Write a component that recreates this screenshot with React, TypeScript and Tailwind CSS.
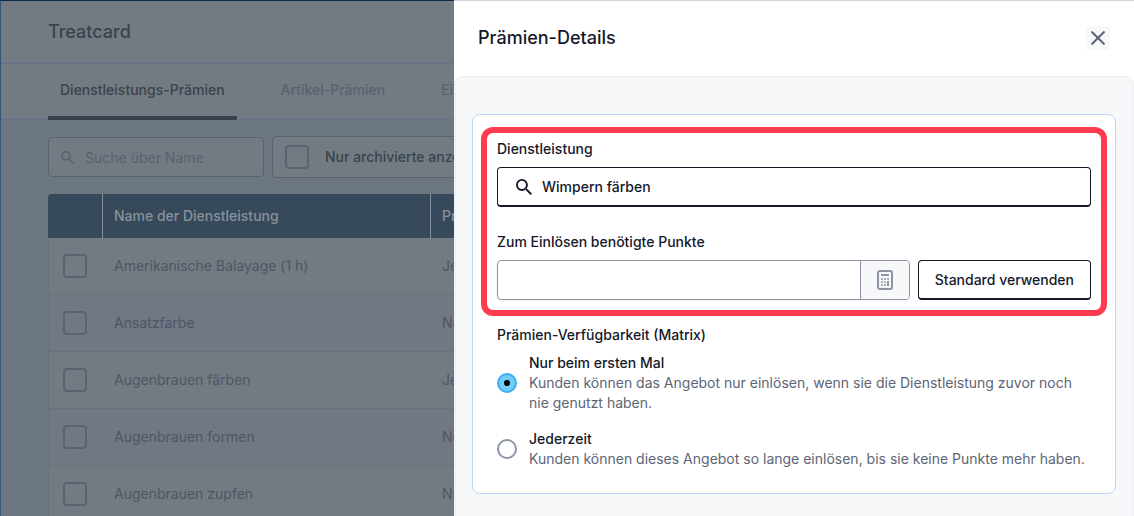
import React, { useState } from "react";

const rows = [
  { name: "Amerikanische Balayage (1 h)", available: "Jederzeit" },
  { name: "Ansatzfarbe", available: "Nur beim ersten Mal" },
  { name: "Augenbrauen färben", available: "Jederzeit" },
  { name: "Augenbrauen formen", available: "Nur beim ersten Mal" },
  { name: "Augenbrauen zupfen", available: "Nur beim ersten Mal" },
];

const availability = [
  {
    id: "first",
    title: "Nur beim ersten Mal",
    text: "Kunden können das Angebot nur einlösen, wenn sie die Dienstleistung zuvor noch nie genutzt haben.",
  },
  {
    id: "always",
    title: "Jederzeit",
    text: "Kunden können dieses Angebot so lange einlösen, bis sie keine Punkte mehr haben.",
  },
];

function SearchIcon({ className }: { className: string }) {
  return (
    <svg viewBox="3 3 17.5 17.5" fill="currentColor" className={className} aria-hidden="true">
      <path d="M15.5 14h-.79l-.28-.27A6.47 6.47 0 0 0 16 9.5 6.5 6.5 0 1 0 9.5 16c1.61 0 3.09-.59 4.23-1.57l.27.28v.79l5 4.99L20.49 19l-4.99-5zm-6 0C7.01 14 5 11.99 5 9.5S7.01 5 9.5 5 14 7.01 14 9.5 11.99 14 9.5 14z" />
    </svg>
  );
}

function CalculatorIcon() {
  return (
    <svg width="16" height="20" viewBox="0 0 16 20" fill="none" aria-hidden="true">
      <rect x="1" y="1" width="14" height="18" rx="2" stroke="#8d95a5" strokeWidth="2" />
      <path d="M4 5h8" stroke="#8d95a5" strokeWidth="2" />
      <path d="M4 9h2M7 9h2M10 9h2M4 12h2M7 12h2M4 15h2M7 15h2" stroke="#a9b0bc" strokeWidth="2" />
      <path d="M11 11v5" stroke="#8d95a5" strokeWidth="2" />
    </svg>
  );
}

function Checkbox({ label, id }: { label: string; id?: string }) {
  return (
    <input
      id={id}
      type="checkbox"
      aria-label={label}
      className="block h-6 w-6 shrink-0 appearance-none rounded border-2 border-[#5b6373] checked:bg-[#5b6373]"
    />
  );
}

function RewardsPage() {
  return (
    <main className="min-w-0 flex-1 overflow-hidden whitespace-nowrap border-l border-t border-l-[#34567f] border-t-[#0a2850] bg-[#6c7781]">
      <header className="flex h-[63px] items-center border-b border-[#63738a] bg-[#737b82] px-[47px]">
        <h1 className="text-lg font-medium text-[#3a424e]">Treatcard</h1>
      </header>

      <nav className="flex h-14 border-b border-[#63738a] bg-[#737b82] pl-[47px] text-sm font-medium">
        <button className="-mb-px h-14 shrink-0 border-b-4 border-[#39424d] px-3 pt-1 pb-1 text-[#3a424e]">
          Dienstleistungs-Prämien
        </button>
        <button className="ml-8 shrink-0 px-3 pb-1 text-[#596171]">Artikel-Prämien</button>
        <button className="ml-8 shrink-0 pl-3 pb-1 text-[#596171]">Einstellungen</button>
      </nav>

      <div className="pl-[47px] pt-4">
        <div className="flex items-center gap-2">
          <div className="flex h-10 w-[216px] shrink-0 items-center gap-[11px] rounded border border-[#586274] bg-[#737b82] px-3 text-[#586172]">
            <SearchIcon className="h-[13px] w-[13px] shrink-0" />
            <input
              type="text"
              aria-label="Suche über Name"
              placeholder="Suche über Name"
              className="w-full min-w-0 bg-transparent pt-px text-sm outline-none placeholder:text-[#586172]"
            />
          </div>
          <div className="flex h-[42px] shrink-0 items-center gap-4 rounded border border-[#586274] bg-[#737b82] px-3">
            <Checkbox id="archived" label="Nur archivierte anzeigen" />
            <label htmlFor="archived" className="text-sm font-medium text-[#3a424e]">
              Nur archivierte anzeigen
            </label>
          </div>
        </div>

        <table className="mt-4 w-[640px] table-fixed border-separate border-spacing-0 text-left text-sm text-[#4e5663]">
          <thead>
            <tr className="h-11 text-[#87919a]">
              <th className="w-[55px] rounded-tl border-r border-[#87919a] bg-[#374a5b]" aria-label="Auswahl" />
              <th className="w-[328px] border-r border-[#87919a] bg-[#374a5b] px-[11px] font-medium">
                Name der Dienstleistung
              </th>
              <th className="bg-[#374a5b] px-[11px] font-medium">Prämien-Verfügbarkeit</th>
            </tr>
          </thead>
          <tbody>
            {rows.map((row) => (
              <tr key={row.name} className="h-[57px] odd:bg-[#737b82] even:bg-[#717883]">
                <td className="border-b border-l border-[#69727c] pl-[14px]">
                  <Checkbox label={row.name} />
                </td>
                <td className="border-b border-[#69727c] px-[11px]">{row.name}</td>
                <td className="border-b border-[#69727c] px-[11px]">{row.available}</td>
              </tr>
            ))}
          </tbody>
        </table>
      </div>
    </main>
  );
}

function RewardDrawer() {
  const [selected, setSelected] = useState("first");

  return (
    <aside
      role="dialog"
      aria-labelledby="drawer-title"
      className="flex w-[680px] max-w-full flex-col border-t border-[#d2d2d3] bg-white text-sm text-[#141929]"
    >
      <header className="flex h-[75px] shrink-0 items-center justify-between px-6 pb-[2px]">
        <h2 id="drawer-title" className="text-lg font-medium">
          Prämien-Details
        </h2>
        <button
          aria-label="Schließen"
          className="flex h-6 w-6 items-center justify-center rounded bg-[#f7f8fa] text-[#5d6575]"
        >
          <svg width="14" height="14" viewBox="0 0 14 14" stroke="currentColor" strokeWidth="2" aria-hidden="true">
            <path d="M0.5 0.5l13 13M13.5 0.5l-13 13" />
          </svg>
        </button>
      </header>

      <div className="flex-1 rounded-t-lg border-2 border-b-0 border-[#f1f2f5] bg-[#f7f8fa] px-4 pt-9">
        <section className="rounded-lg border border-[#b7d7fb] bg-white px-2 pt-3 pb-6">
          {/* Highlighted fields */}
          <div className="rounded-xl border-[6px] border-[#ff3b50] px-[10px] pt-[6px] pb-[10px]">
            <label htmlFor="service" className="block font-medium">
              Dienstleistung
            </label>
            <div className="mt-2 flex h-10 items-center gap-[10px] rounded border border-b-2 border-[#141929] px-[18px]">
              <SearchIcon className="h-4 w-4 shrink-0" />
              <input
                id="service"
                type="text"
                defaultValue="Wimpern färben"
                className="w-full min-w-0 bg-transparent font-medium outline-none"
              />
            </div>

            <label htmlFor="points" className="mt-[25px] block font-medium">
              Zum Einlösen benötigte Punkte
            </label>
            <div className="mt-2 flex gap-2">
              <div className="flex h-10 flex-1 overflow-hidden rounded border border-[#8d95a5] shadow-xs">
                <input id="points" type="text" className="min-w-0 flex-1 px-3 outline-none" />
                <button
                  aria-label="Rechner"
                  className="flex w-[49px] items-center justify-center border-l border-[#8d95a5] bg-[#f7f8fa]"
                >
                  <CalculatorIcon />
                </button>
              </div>
              <button className="h-10 rounded border border-b-2 border-[#141929] px-4 font-medium">
                Standard verwenden
              </button>
            </div>
          </div>

          <fieldset className="mx-4 mt-[9px]">
            <legend className="font-medium">Prämien-Verfügbarkeit (Matrix)</legend>
            <div className="mt-2 flex flex-col gap-4">
              {availability.map((option) => (
                <label key={option.id} className="flex items-center gap-3">
                  <input
                    type="radio"
                    name="availability"
                    checked={selected === option.id}
                    onChange={() => setSelected(option.id)}
                    className="flex h-5 w-5 shrink-0 appearance-none items-center justify-center rounded-full border-2 border-[#8d95a5] bg-white checked:border-[#3ab0f3] checked:bg-[#73cbf8] checked:before:h-[6px] checked:before:w-[6px] checked:before:rounded-full checked:before:bg-black"
                  />
                  <span>
                    <span className="block font-medium">{option.title}</span>
                    <span className="block text-[#5d6575]">{option.text}</span>
                  </span>
                </label>
              ))}
            </div>
          </fieldset>
        </section>
      </div>
    </aside>
  );
}

export default function App() {
  return (
    <div className="flex h-screen overflow-hidden font-['Inter',sans-serif]">
      <RewardsPage />
      <RewardDrawer />
    </div>
  );
}
